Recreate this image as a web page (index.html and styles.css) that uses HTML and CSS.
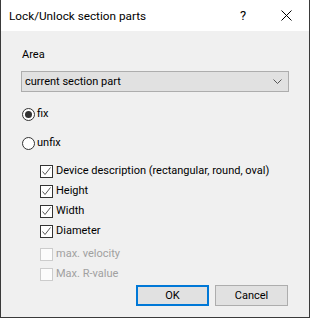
FILE: index.html
```html
<!DOCTYPE html>
<html>
<head>
<meta charset="utf-8">
<link rel="stylesheet" href="styles.css">
</head>
<body>
<div class="window">
  <div class="titlebar">
    <span class="title">Lock/Unlock section parts</span>
    <span class="help">?</span>
    <svg class="close" width="11" height="11" viewBox="0 0 11 11"><path d="M0.5 0.5 L10.5 10.5 M10.5 0.5 L0.5 10.5" stroke="#000" stroke-width="1" fill="none"/></svg>
  </div>
  <div class="content">
    <div class="label">Area</div>
    <div class="select">
      <span>current section part</span>
      <svg class="chev" width="9" height="5" viewBox="0 0 9 5"><path d="M0.5 0.5 L4.5 4.5 L8.5 0.5" stroke="#555" stroke-width="1" fill="none"/></svg>
    </div>
    <div class="row radio-row first">
      <span class="radio checked"></span><span>fix</span>
    </div>
    <div class="row radio-row second">
      <span class="radio"></span><span>unfix</span>
    </div>
    <div class="checks">
      <div class="row"><span class="cb on"><svg width="11" height="11" viewBox="0 0 11 11"><path d="M1.5 5.5 L4 8.5 L9.5 1.5" stroke="#555" stroke-width="1" fill="none"/></svg></span><span>Device description (rectangular, round, oval)</span></div>
      <div class="row"><span class="cb on"><svg width="11" height="11" viewBox="0 0 11 11"><path d="M1.5 5.5 L4 8.5 L9.5 1.5" stroke="#555" stroke-width="1" fill="none"/></svg></span><span>Height</span></div>
      <div class="row"><span class="cb on"><svg width="11" height="11" viewBox="0 0 11 11"><path d="M1.5 5.5 L4 8.5 L9.5 1.5" stroke="#555" stroke-width="1" fill="none"/></svg></span><span>Width</span></div>
      <div class="row"><span class="cb on"><svg width="11" height="11" viewBox="0 0 11 11"><path d="M1.5 5.5 L4 8.5 L9.5 1.5" stroke="#555" stroke-width="1" fill="none"/></svg></span><span>Diameter</span></div>
      <div class="row disabled gap"><span class="cb"></span><span>max. velocity</span></div>
      <div class="row disabled"><span class="cb"></span><span>Max. R-value</span></div>
    </div>
    <div class="buttons">
      <div class="btn default">OK</div>
      <div class="btn">Cancel</div>
    </div>
  </div>
</div>
</body>
</html>
```
FILE: styles.css
```css
html, body {
  margin: 0;
  padding: 0;
  background: #f0f0f0;
}
body {
  font-family: Roboto, "Noto Sans", sans-serif;
  font-size: 11px;
  color: #000;
  white-space: nowrap;
}
.window {
  width: 310px;
  height: 318px;
  box-sizing: border-box;
  border: 1px solid #3a3a3a;
  border-top: none;
  background: #f0f0f0;
  display: flex;
  flex-direction: column;
}
.titlebar {
  height: 31px;
  flex: none;
  background: #fff;
  display: flex;
  align-items: center;
  padding-left: 8px;
  box-sizing: border-box;
}
.title {
  font-size: 11.75px;
  line-height: 16px;
  flex: 1;
  margin-top: 1px;
}
.help {
  font-size: 13px;
  width: 8px;
  margin-right: 33px;
  line-height: 16px;
}
.close {
  margin-right: 17px;
  display: block;
}
.content {
  padding: 16px 20px 0 20px;
  display: flex;
  flex-direction: column;
}
.label {
  line-height: 16px;
  padding-left: 1px;
}
.select {
  margin-top: 8px;
  height: 21px;
  box-sizing: border-box;
  border: 1px solid #adadad;
  background: #e1e1e1;
  display: flex;
  align-items: center;
  justify-content: space-between;
  padding: 0 3px 0 3px;
  line-height: 16px;
}
.chev {
  display: block;
  margin-right: 3px;
}
.row {
  display: flex;
  align-items: center;
  height: 16px;
  line-height: 16px;
}
.radio-row.first { margin-top: 14px; }
.radio-row.second { margin-top: 13px; }
.radio {
  width: 13px;
  height: 13px;
  box-sizing: border-box;
  border: 1px solid #333;
  border-radius: 50%;
  background: #fff;
  margin-left: 1px;
  margin-right: 2px;
  display: flex;
  align-items: center;
  justify-content: center;
}
.radio.checked::after {
  content: "";
  width: 7px;
  height: 7px;
  border-radius: 50%;
  background: #333;
}
.checks {
  margin-top: 12px;
  padding-left: 19px;
  display: flex;
  flex-direction: column;
  gap: 4px;
}
.checks .gap { margin-top: 3px; }
.cb {
  width: 13px;
  height: 13px;
  box-sizing: border-box;
  border: 1px solid #333;
  background: #fff;
  margin-right: 3px;
  display: flex;
  align-items: center;
  justify-content: center;
}
.cb svg { display: block; }
.disabled { color: #a0a0a0; }
.disabled .cb {
  border-color: #cccccc;
  background: #fcfcfc;
}
.buttons {
  margin-top: 3px;
  display: flex;
  justify-content: flex-end;
  gap: 6px;
  padding-right: 1px;
}
.btn {
  width: 73px;
  height: 21px;
  box-sizing: border-box;
  border: 1px solid #adadad;
  background: #e1e1e1;
  display: flex;
  align-items: center;
  justify-content: center;
}
.btn.default {
  border: 2px solid #0078d7;
}
```
